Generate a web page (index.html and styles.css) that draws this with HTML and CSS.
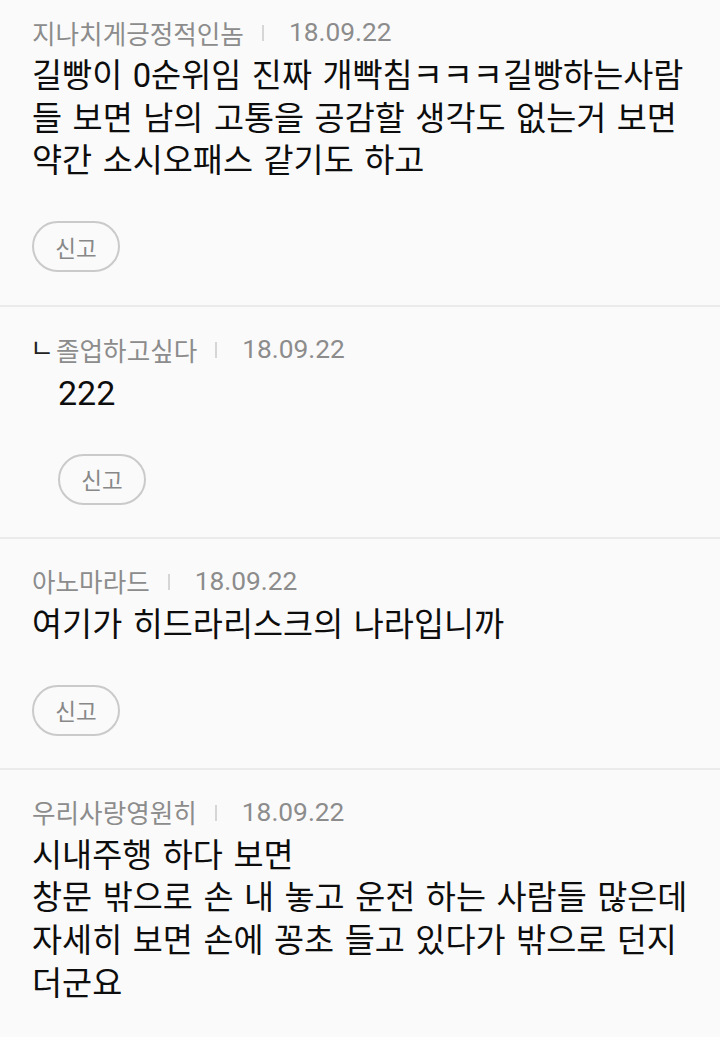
FILE: index.html
```html
<!DOCTYPE html>
<html lang="ko">
<head>
<meta charset="utf-8">
<title>댓글</title>
<link rel="stylesheet" href="styles.css">
</head>
<body>
<ul class="comments">
  <li class="comment first">
    <div class="meta"><span class="name">지나치게긍정적인놈</span><span class="bar"></span><span class="date">18.09.22</span></div>
    <p class="body">길빵이 0순위임 진짜 개빡침ㅋㅋㅋ길빵하는사람들 보면 남의 고통을 공감할 생각도 없는거 보면 약간 소시오패스 같기도 하고</p>
    <button class="report">신고</button>
  </li>
  <li class="comment reply">
    <div class="meta"><span class="mark">ㄴ</span><span class="name">졸업하고싶다</span><span class="bar"></span><span class="date">18.09.22</span></div>
    <p class="body"><span class="num">222</span></p>
    <button class="report">신고</button>
  </li>
  <li class="comment">
    <div class="meta"><span class="name">아노마라드</span><span class="bar"></span><span class="date">18.09.22</span></div>
    <p class="body">여기가 히드라리스크의 나라입니까</p>
    <button class="report">신고</button>
  </li>
  <li class="comment">
    <div class="meta"><span class="name">우리사랑영원히</span><span class="bar"></span><span class="date">18.09.22</span></div>
    <p class="body">시내주행 하다 보면<br>창문 밖으로 손 내 놓고 운전 하는 사람들 많은데 자세히 보면 손에 꽁초 들고 있다가 밖으로 던지더군요</p>
  </li>
</ul>
</body>
</html>
```
FILE: styles.css
```css
html, body {
  margin: 0;
  padding: 0;
  background: #fafafa;
}
body {
  font-family: "Roboto", "Noto Sans CJK KR", sans-serif;
  color: #0d0d0d;
  overflow: hidden;
}
.comments {
  list-style: none;
  margin: 0;
  padding: 0;
}
.comment {
  padding: 26px 20px 32px 32px;
  border-bottom: 2px solid #ebebeb;
}
.comment.first {
  padding-top: 16px;
  padding-bottom: 33px;
}
.comment.reply {
  padding-left: 58px;
}
.meta {
  display: flex;
  align-items: center;
  height: 32px;
  color: #8c8c8c;
  white-space: nowrap;
}
.name {
  font-size: 25.6px;
}
.mark {
  width: 26px;
  margin-left: -28px;
  font-size: 26px;
  color: #222;
  line-height: 32px;
}
.bar {
  width: 2px;
  height: 16px;
  background: #d6d6d6;
  margin: 2px 25px 0 18px;
}
.date {
  font-size: 26.3px;
}
.body {
  margin: 7px 0 0;
  font-size: 32.7px;
  line-height: 42.7px;
  word-spacing: 2.4px;
}
.num {
  font-size: 34px;
}
.report {
  display: block;
  margin-top: 38px;
  width: 88px;
  height: 51px;
  border: 2px solid #cacaca;
  border-radius: 26px;
  background: transparent;
  color: #888;
  font-family: "Roboto", "Noto Sans CJK KR", sans-serif;
  font-size: 22.5px;
  padding: 0;
}
```
